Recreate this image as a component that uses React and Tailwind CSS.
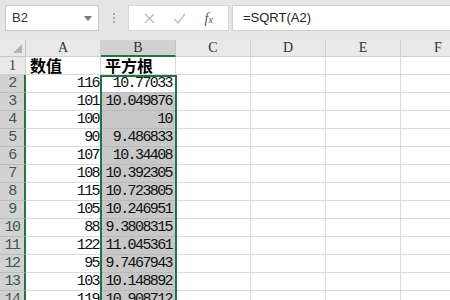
import React from 'react';

const rows = [
  [116, '10.77033'],
  [101, '10.049876'],
  [100, '10'],
  [90, '9.486833'],
  [107, '10.34408'],
  [108, '10.392305'],
  [115, '10.723805'],
  [105, '10.246951'],
  [88, '9.3808315'],
  [122, '11.045361'],
  [95, '9.7467943'],
  [103, '10.148892'],
  [119, '10.908712'],
];

const cols = ['A', 'B', 'C', 'D', 'E', 'F'];

const mono = { fontFamily: '"Liberation Mono", monospace' };

const Toolbar = () => (
  <div className="h-[40px] bg-[#e6e6e6] flex items-start pt-[5px] pl-[5px]">
    <div className="w-[94px] h-[26px] bg-white border border-[#c8c8c8] flex items-center justify-between px-[6px]">
      <span className="text-[13px] text-[#333] font-['Liberation_Sans',sans-serif]">B2</span>
      <svg width="8" height="5" viewBox="0 0 8 5">
        <path d="M0 0 L8 0 L4 5 Z" fill="#777" />
      </svg>
    </div>
    <div className="w-[29px] h-[26px] flex flex-col items-center justify-center gap-[2px]">
      <span className="w-[2px] h-[2px] bg-[#a8a8a8]" />
      <span className="w-[2px] h-[2px] bg-[#a8a8a8]" />
      <span className="w-[2px] h-[2px] bg-[#a8a8a8]" />
    </div>
    <div className="w-[101px] h-[26px] bg-white border border-[#d8d8d8] flex items-center justify-around px-[6px]">
      <svg width="11" height="11" viewBox="0 0 11 11">
        <path d="M1 1 L10 10 M10 1 L1 10" stroke="#bdbdbd" strokeWidth="1.4" />
      </svg>
      <svg width="13" height="11" viewBox="0 0 13 11">
        <path d="M1 6 L5 10 L12 1" stroke="#bdbdbd" strokeWidth="1.4" fill="none" />
      </svg>
      <span className="text-[14px] italic text-[#555] font-['Liberation_Serif',serif]">
        f<span className="text-[10px]">x</span>
      </span>
    </div>
    <div className="ml-[3px] flex-1 h-[26px] bg-white border border-[#d0d0d0] border-r-0 flex items-center pl-[10px]">
      <span className="text-[13px] text-[#222] font-['Liberation_Sans',sans-serif]">=SQRT(A2)</span>
    </div>
  </div>
);

const Sheet = () => (
  <div className="relative">
    <div className="grid grid-cols-[26px_75px_75px_75px_75px_75px_75px]">
      <div className="h-[17px] bg-[#e9e9e9] border-r border-b border-[#c8c8c8] flex items-end justify-end pr-[3px] pb-[3px]">
        <svg width="9" height="9" viewBox="0 0 9 9">
          <path d="M9 0 L9 9 L0 9 Z" fill="#b4b4b4" />
        </svg>
      </div>
      {cols.map((c) => (
        <div
          key={c}
          className={
            c === 'B'
              ? 'h-[17px] bg-[#d2d2d2] border-r border-[#c8c8c8] border-b-2 border-b-[#217346] flex items-center justify-center text-[14px] leading-[16px] text-[#333]'
              : 'h-[17px] bg-[#e9e9e9] border-r border-b border-[#d0d0d0] flex items-center justify-center text-[14px] leading-[16px] text-[#333]'
          }
          style={{ fontFamily: '"Liberation Serif", serif' }}
        >
          {c}
        </div>
      ))}

      <div className="h-[18px] bg-[#e9e9e9] border-r border-b border-[#d0d0d0] flex items-center justify-center text-[15px] leading-[17px] text-[#444]" style={{ fontFamily: '"Liberation Serif", serif' }}>
        1
      </div>
      <div className="h-[18px] border-r border-b border-[#dadada] flex items-end pl-[4px] text-[16px] font-bold text-black leading-[17px] font-['Noto_Sans_CJK_SC',sans-serif]">
        数值
      </div>
      <div className="h-[18px] border-r border-b border-[#dadada] flex items-end pl-[4px] text-[16px] font-bold text-black leading-[17px] font-['Noto_Sans_CJK_SC',sans-serif]">
        平方根
      </div>
      {[0, 1, 2, 3].map((i) => (
        <div key={i} className="h-[18px] border-r border-b border-[#dadada]" />
      ))}

      {rows.map(([a, b], i) => (
        <React.Fragment key={i}>
          <div
            className="h-[18px] bg-[#d2d2d2] border-r-2 border-r-[#217346] border-b border-b-[#bcbcbc] flex items-center justify-center text-[15px] leading-[17px] text-[#3d5a4a] tracking-[-1.5px]"
            style={mono}
          >
            {i + 2}
          </div>
          <div
            className="h-[18px] border-r border-b border-[#dadada] flex items-center justify-end pr-[1px] text-[15px] leading-[17px] text-[#111] tracking-[-1.6px]"
            style={mono}
          >
            {a}
          </div>
          <div
            className={
              (i === 0 ? 'bg-white' : 'bg-[#c8c8c8]') +
              ' h-[18px] border-r border-b border-[#b8b8b8] flex items-center justify-end pr-[3px] text-[15px] leading-[17px] text-[#111] tracking-[-1.6px]'
            }
            style={mono}
          >
            {b}
          </div>
          {[0, 1, 2, 3].map((j) => (
            <div key={j} className="h-[18px] border-r border-b border-[#dadada]" />
          ))}
        </React.Fragment>
      ))}
    </div>
    <div className="absolute left-[100px] top-[35px] w-[77px] h-[300px] border-2 border-[#217346] pointer-events-none" />
  </div>
);

export default function App() {
  return (
    <div className="w-[450px] h-[300px] overflow-hidden bg-white">
      <Toolbar />
      <Sheet />
    </div>
  );
}
